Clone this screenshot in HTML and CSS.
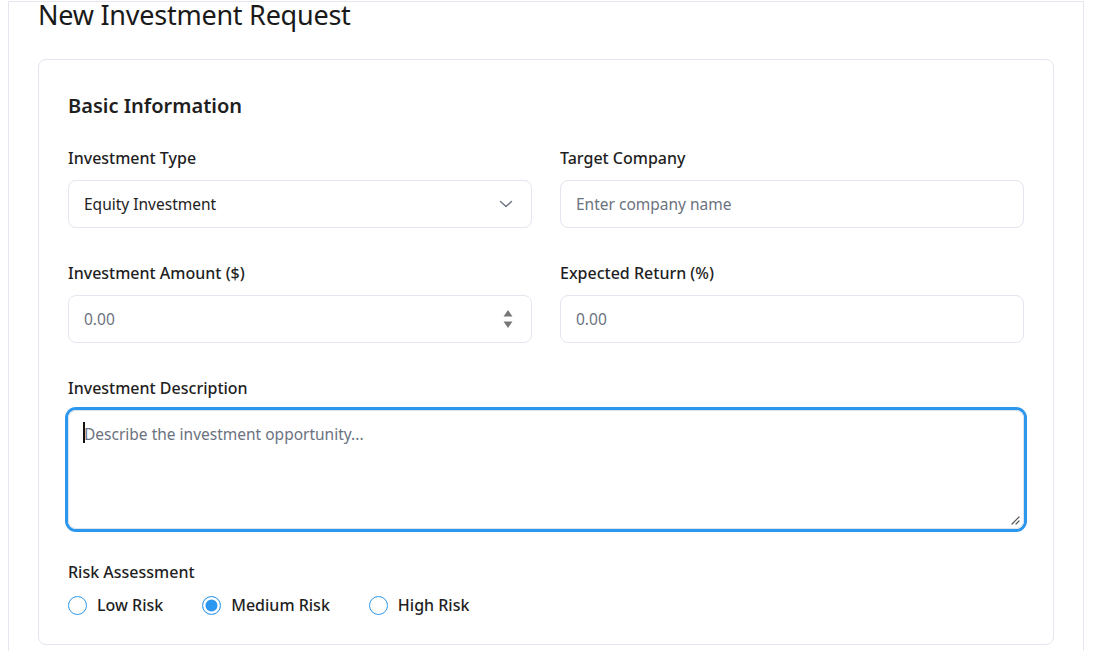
FILE: index.html
```html
<!DOCTYPE html>
<html lang="en">
<head>
<meta charset="utf-8">
<title>New Investment Request</title>
<link rel="stylesheet" href="styles.css">
</head>
<body>
<div class="shell">
  <h1 class="page-title">New Investment Request</h1>
  <section class="card">
    <h2 class="card-title">Basic Information</h2>
    <div class="grid">
      <div class="field">
        <label class="label">Investment Type</label>
        <div class="control select">
          <span class="value">Equity Investment</span>
          <svg class="chev" width="14" height="8" viewBox="0 0 14 8"><path d="M1.5 1.5 L7 6.5 L12.5 1.5" fill="none" stroke="#6b7280" stroke-width="1.4" stroke-linecap="round" stroke-linejoin="round"/></svg>
        </div>
      </div>
      <div class="field">
        <label class="label">Target Company</label>
        <div class="control"><span class="placeholder">Enter company name</span></div>
      </div>
      <div class="field">
        <label class="label">Investment Amount ($)</label>
        <div class="control number">
          <span class="placeholder">0.00</span>
          <svg class="spin" width="10" height="22" viewBox="0 0 10 22"><path d="M0.5 8.5 L5 2 L9.5 8.5 Z" fill="#777"/><path d="M0.5 13.5 L5 20 L9.5 13.5 Z" fill="#777"/></svg>
        </div>
      </div>
      <div class="field">
        <label class="label">Expected Return (%)</label>
        <div class="control"><span class="placeholder">0.00</span></div>
      </div>
      <div class="field wide">
        <label class="label">Investment Description</label>
        <div class="textarea focused">
          <span class="caret"></span>
          <span class="placeholder">Describe the investment opportunity...</span>
          <svg class="grip" width="10" height="10" viewBox="0 0 10 10"><path d="M9 2 L2 9 M9 6 L6 9" stroke="#555" stroke-width="1.2" stroke-linecap="round"/></svg>
        </div>
      </div>
    </div>
    <div class="risk">
      <div class="label plain">Risk Assessment</div>
      <div class="radios">
        <span class="option"><span class="radio"></span><span class="opt-text">Low Risk</span></span>
        <span class="option"><span class="radio checked"></span><span class="opt-text">Medium Risk</span></span>
        <span class="option"><span class="radio"></span><span class="opt-text">High Risk</span></span>
      </div>
    </div>
  </section>
</div>
</body>
</html>
```
FILE: styles.css
```css
* { box-sizing: border-box; }
html, body { height: 100%; }
body {
  margin: 1px 9px 0 8px;
  background: #fff;
  font-family: "Noto Sans", "Open Sans", sans-serif;
  color: #1f1f1f;
  overflow: hidden;
}
.shell {
  border: 1px solid #e6e6f0;
  border-bottom: none;
  padding: 0 29px 40px;
  min-height: 100%;
}
.page-title {
  margin: -1px 0 0;
  font-size: 27px;
  font-weight: 400;
  letter-spacing: -0.25px;
  line-height: 28px;
  color: #1a1a1a;
}
.card {
  margin-top: 30px;
  border: 1px solid #e3e6ee;
  border-radius: 8px;
  padding: 29px 29px 27px;
}
.card-title {
  margin: 3px 0 26px;
  font-size: 20px;
  font-weight: 600;
  line-height: 28px;
}
.grid {
  display: grid;
  grid-template-columns: 1fr 1fr;
  column-gap: 28px;
  row-gap: 33px;
}
.wide { grid-column: 1 / -1; }
.field { display: flex; flex-direction: column; gap: 10px; }
.label {
  font-size: 16px;
  font-weight: 500;
  line-height: 24px;
  color: #1f1f1f;
}
.label.plain { font-weight: 500; }
.control {
  position: relative;
  height: 48px;
  border: 1px solid #e3e6ee;
  border-radius: 8px;
  padding: 0 15px;
  display: flex;
  align-items: center;
  font-size: 15.5px;
}
.value { color: #222; }
.placeholder { color: #6b7280; }
.chev { position: absolute; right: 18px; top: 19px; }
.spin { position: absolute; right: 18px; top: 12px; }
.textarea {
  position: relative;
  height: 119px;
  border: 1px solid #dfe3ea;
  border-radius: 8px;
  padding: 11px 15px;
  font-size: 15.5px;
  line-height: 24px;
}
.textarea.focused { box-shadow: 0 0 0 3px #2b97ee; }
.caret {
  position: absolute;
  left: 14px;
  top: 11px;
  width: 2px;
  height: 21px;
  background: #111;
}
.grip { position: absolute; right: 3px; bottom: 3px; }
.risk { margin-top: 31px; }
.radios {
  display: flex;
  gap: 39px;
  margin-top: 9px;
}
.option { display: flex; align-items: center; gap: 10px; font-size: 16px; font-weight: 500; line-height: 24px; }
.radio {
  width: 19px;
  height: 19px;
  border-radius: 50%;
  border: 1.5px solid #2b97ee;
  background: #fff;
}
.radio.checked { box-shadow: inset 0 0 0 2.5px #fff, inset 0 0 0 10px #2b97ee; }
```
